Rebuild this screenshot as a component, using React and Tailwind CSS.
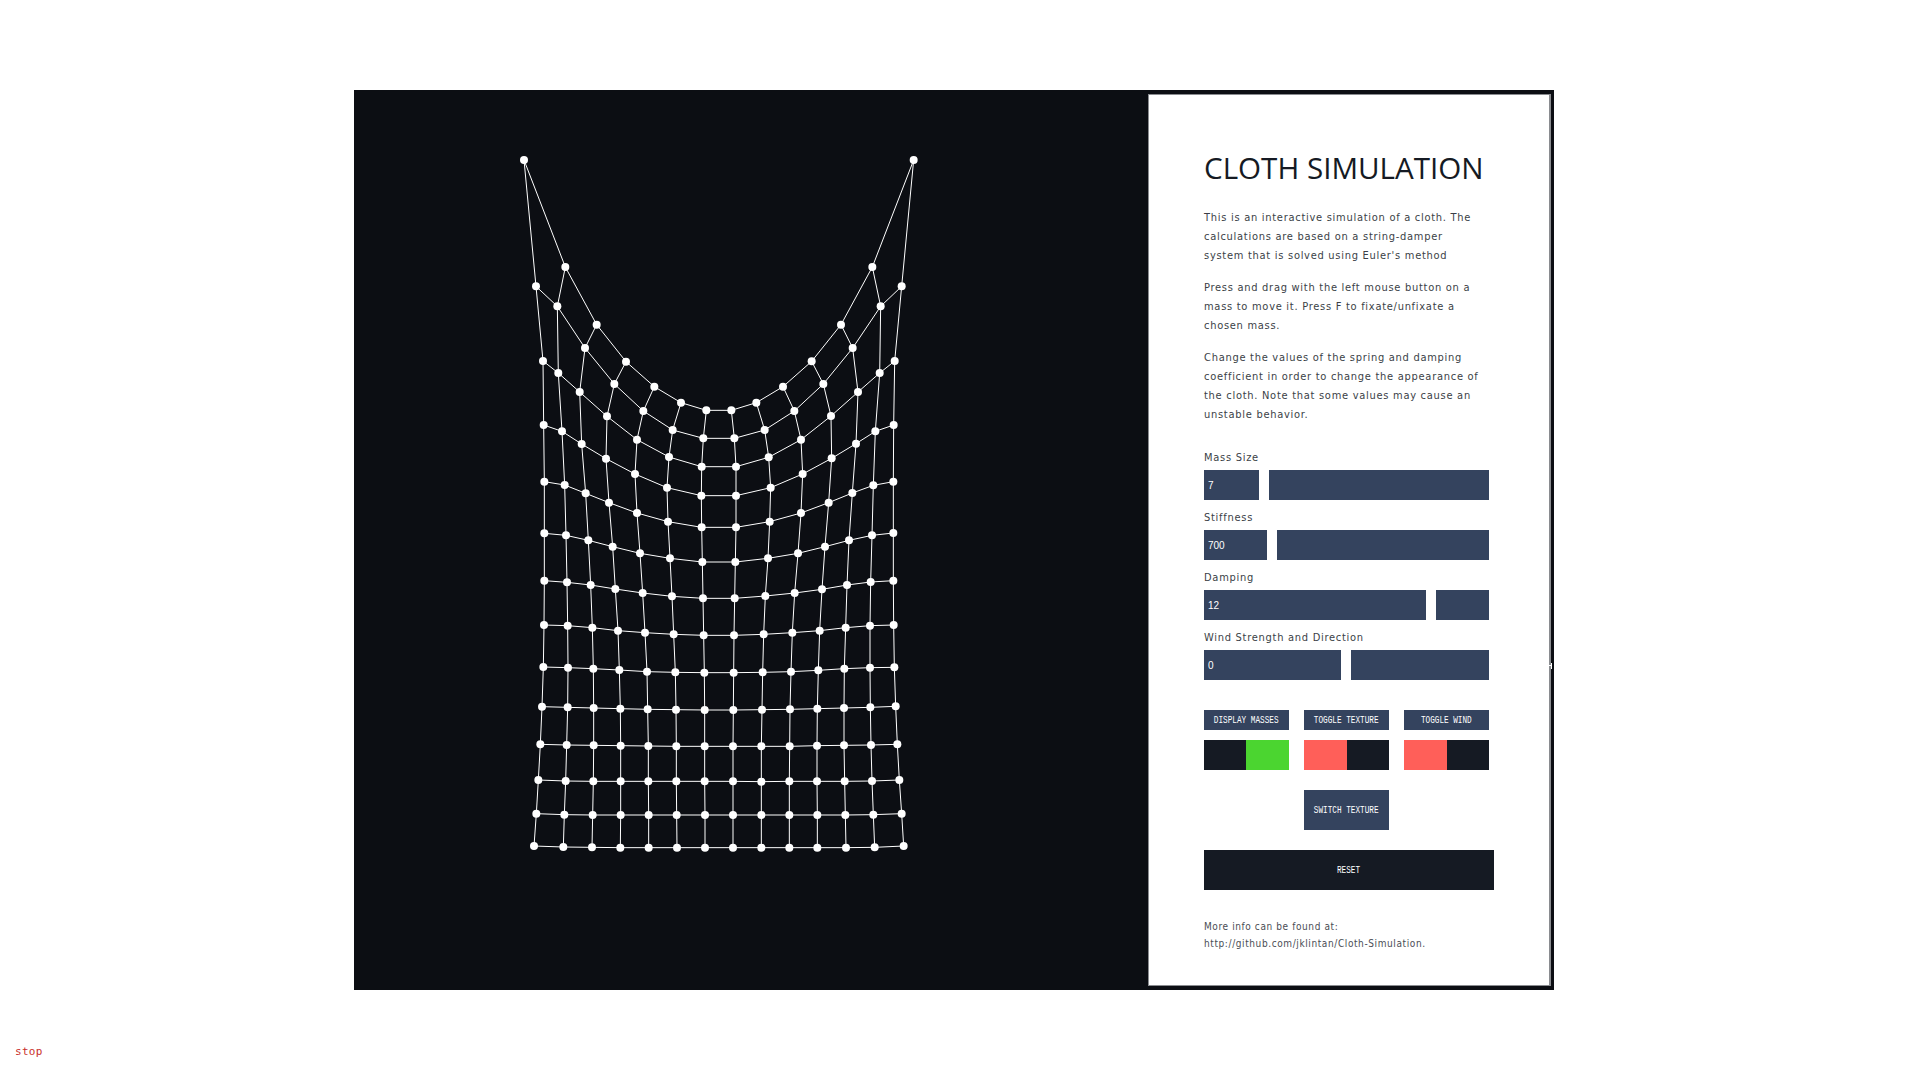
import React from "react";

// crop readings -> page coordinates
const crop = (ox, oy, pts) => pts.map(([x, y]) => [ox + x / 3, oy + y / 3]);

const rows = [
  crop(500, 120, [[72,120],[196,441],[290,614],[378,725],[463,800],[543,848],[619,871],[694,871],[769,848],[849,800],[935,724],[1023,614],[1117,441],[1241,120]]),
  crop(500, 120, [[108,499],[172,559],[255,684],[343,792],[430,873],[518,930],[610,955],[703,955],[794,930],[883,873],[970,792],[1058,684],[1142,559],[1205,499]]),
  [[543,361],[558.3,373],[579.7,392],[607,416.3],[637,439.7],[669,457],[701.7,466.7],[736,466.7],[768.7,457.3],[801,439.7],[831,416],[858,392],[879.7,373],[894.7,361]],
  crop(530, 400, [[41,75],[96,94],[155,132],[228,176],[315,222],[411,263],[514,287],[618,287],[722,263],[818,222],[905,175],[978,131],[1036,94],[1091,75]]),
  crop(480, 430, [[193,155],[254,165],[317,190],[387,218],[471,249],[564,275],[665,292],[768,292],[869,275],[963,249],[1046,218],[1117,189],[1180,166],[1240,155]]),
  crop(480, 430, [[193,310],[258,316],[325,331],[398,350],[480,370],[570,385],[667,396],[766,396],[864,385],[954,370],[1035,350],[1107,331],[1176,316],[1240,309]]),
  crop(480, 430, [[193,452],[261,457],[332,465],[406,477],[488,489],[576,499],[669,505],[764,505],[856,498],[944,489],[1026,478],[1101,465],[1172,456],[1240,452]]),
  crop(480, 620, [[192,15],[263,17],[337,23],[414,32],[495,38],[581,43],[671,46],[762,46],[851,43],[937,38],[1019,32],[1097,23],[1170,17],[1241,15]]),
  crop(480, 620, [[190,141],[264,143],[340,146],[418,150],[501,155],[586,157],[673,158],[761,158],[848,157],[933,155],[1015,151],[1093,146],[1170,143],[1243,142]]),
  crop(480, 620, [[186,260],[263,262],[341,264],[421,266],[503,268],[588,269],[674,270],[760,270],[846,269],[930,268],[1012,266],[1092,264],[1171,262],[1247,259]]),
  crop(480, 620, [[181,373],[260,375],[341,376],[422,377],[505,378],[589,379],[674,379],[759,379],[844,379],[929,379],[1011,377],[1092,376],[1173,375],[1252,373]]),
  crop(480, 620, [[175,480],[257,483],[340,484],[422,484],[505,484],[589,484],[674,484],[759,484],[844,485],[928,484],[1011,484],[1094,484],[1176,483],[1258,480]]),
  crop(480, 620, [[169,581],[253,584],[338,585],[422,585],[506,585],[590,585],[675,585],[759,585],[844,585],[928,585],[1012,585],[1096,585],[1180,584],[1265,581]]),
  crop(480, 620, [[162,678],[250,681],[336,682],[421,683],[506,683],[591,683],[675,683],[759,683],[844,683],[928,683],[1012,683],[1098,683],[1184,682],[1271,678]]),
];

function Cloth() {
  const lines = [];
  rows.forEach((row, r) =>
    row.forEach(([x, y], c) => {
      if (c < row.length - 1) lines.push([x, y, row[c + 1][0], row[c + 1][1]]);
      if (r < rows.length - 1) lines.push([x, y, rows[r + 1][c][0], rows[r + 1][c][1]]);
    })
  );
  return (
    <svg className="w-[794px] h-[900px] shrink-0" viewBox="354 90 794 900">
      {lines.map(([x1, y1, x2, y2], i) => (
        <line key={i} x1={x1} y1={y1} x2={x2} y2={y2} stroke="#fff" strokeWidth="1" />
      ))}
      {rows.flat().map(([x, y], i) => (
        <circle key={i} cx={x} cy={y} r="4" fill="#fff" />
      ))}
    </svg>
  );
}

// the button font is a tall narrow pixel face, mono squeezed sideways is the closest
function BtnText({ children }) {
  return <span className="shrink-0 whitespace-nowrap scale-x-[0.7] text-[11px] font-['Liberation_Mono',monospace]">{children}</span>;
}

function Slider({ label, value, left, right }) {
  return (
    <div className="h-[60px]">
      <div className="pt-2 mb-0.5 leading-5 text-[11px] tracking-[0.72px] text-[#3b3f47]">{label}</div>
      <div className="flex w-[285px] h-[30px] gap-[10px]">
        <div className={`${left} bg-[#34435e] pl-1 flex items-center text-white text-[10px] font-['Liberation_Sans',sans-serif]`}>{value}</div>
        <div className={`${right} bg-[#34435e]`}></div>
      </div>
    </div>
  );
}

function Toggle({ label, on }) {
  return (
    <div className="w-[85px]">
      <div className="h-5 bg-[#34435e] text-white flex items-center justify-center"><BtnText>{label}</BtnText></div>
      {on ? (
        <div className="flex h-[30px] mt-[10px]">
          <div className="w-[42px] bg-[#151a23]"></div>
          <div className="flex-1 bg-[#4bd530]"></div>
        </div>
      ) : (
        <div className="flex h-[30px] mt-[10px]">
          <div className="w-[43px] bg-[#ff5f59]"></div>
          <div className="flex-1 bg-[#151a23]"></div>
        </div>
      )}
    </div>
  );
}

function Panel() {
  return (
    <div className="relative w-[403px] h-[892px] mt-1 bg-white border border-[#8a8c90] border-r-2 pl-[55px] pt-[55px] font-['DejaVu_Sans_Condensed','DejaVu_Sans',sans-serif]">
      <h1 className="text-[29.6px] leading-9 text-[#151a23] whitespace-nowrap font-['Open_Sans',sans-serif]">CLOTH SIMULATION</h1>
      <div className="mt-[22px] text-[11px] leading-[19px] tracking-[0.72px] text-[#3b3f47] whitespace-nowrap">
        <p>This is an interactive simulation of a cloth. The<br />calculations are based on a string-damper<br />system that is solved using Euler's method</p>
        <p className="mt-[13px]">Press and drag with the left mouse button on a<br />mass to move it. Press F to fixate/unfixate a<br />chosen mass.</p>
        <p className="mt-[13px]">Change the values of the spring and damping<br />coefficient in order to change the appearance of<br />the cloth. Note that some values may cause an<br />unstable behavior.</p>
      </div>
      <div className="mt-4">
        <Slider label="Mass Size" value="7" left="w-[55px]" right="w-[220px]" />
        <Slider label="Stiffness" value="700" left="w-[63px]" right="w-[212px]" />
        <Slider label="Damping" value="12" left="w-[222px]" right="w-[53px]" />
        <Slider label="Wind Strength and Direction" value="0" left="w-[137px]" right="w-[138px]" />
      </div>
      <div className="flex gap-[15px] mt-[30px]">
        <Toggle label="DISPLAY MASSES" on />
        <Toggle label="TOGGLE TEXTURE" />
        <Toggle label="TOGGLE WIND" />
      </div>
      <button className="flex items-center justify-center w-[85px] h-10 ml-[100px] mt-5 bg-[#34435e] text-white"><BtnText>SWITCH TEXTURE</BtnText></button>
      <button className="flex items-center justify-center w-[290px] h-10 mt-5 bg-[#151a23] text-white"><BtnText>RESET</BtnText></button>
      <p className="mt-[28px] text-[10px] leading-[17px] tracking-[0.6px] text-[#4a4d55] whitespace-nowrap">More info can be found at:<br />http://github.com/jklintan/Cloth-Simulation.</p>
      {/* little tick sitting on the right edge */}
      <div className="absolute left-[399px] top-[570px] w-[3px] h-px bg-white"></div>
      <div className="absolute left-[402px] top-[568px] w-px h-[6px] bg-white"></div>
    </div>
  );
}

export default function App() {
  return (
    <div className="min-h-[1080px] bg-white">
      <div className="pt-[90px] pl-[354px]">
        <div className="flex w-[1200px] h-[900px] bg-[#0c0e13]">
          <Cloth />
          <Panel />
        </div>
      </div>
      <div className="mt-[54px] pl-[15px] text-[11px] leading-4 tracking-[0.3px] text-[#c9302c] font-['DejaVu_Sans_Mono',monospace]">stop</div>
    </div>
  );
}
